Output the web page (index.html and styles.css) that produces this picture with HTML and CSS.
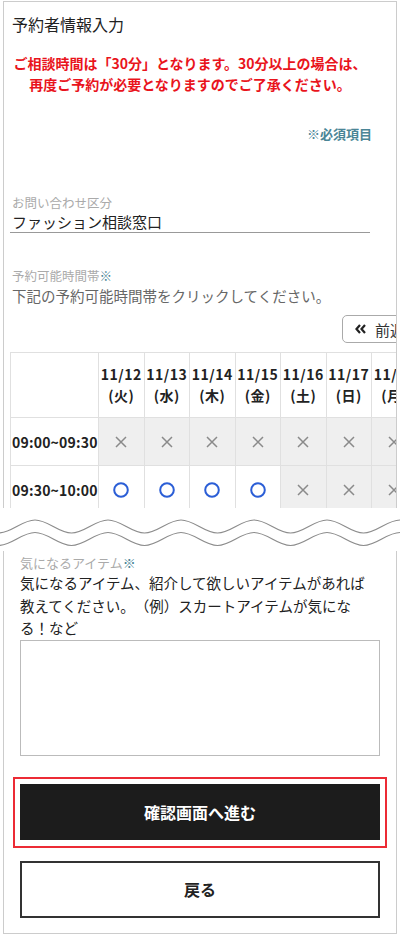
FILE: index.html
```html
<!DOCTYPE html>
<html lang="ja">
<head>
    <meta charset="UTF-8">
    <meta name="viewport" content="width=device-width, initial-scale=1.0">
    <title>予約者情報入力</title>
    <link rel="stylesheet" href="styles.css">
</head>
<body>
    <section class="sheet sheet-top">
        <h1 class="title">予約者情報入力</h1>
        <p class="notice">ご相談時間は「30分」となります。30分以上の場合は、<br>再度ご予約が必要となりますのでご了承ください。</p>
        <p class="required">※必須項目</p>

        <div class="field">
            <div class="label">お問い合わせ区分</div>
            <div class="value">ファッション相談窓口</div>
        </div>

        <div class="field field-time">
            <div class="label">予約可能時間帯<span class="mark">※</span></div>
            <p class="hint">下記の予約可能時間帯をクリックしてください。</p>
        </div>

        <div class="week-nav">
            <button class="week-btn">
                <svg width="11" height="10" viewBox="0 0 11 10"><path d="M5 1 L1.5 5 L5 9 M10 1 L6.5 5 L10 9" fill="none" stroke="#222" stroke-width="2.2"/></svg>
                前週
            </button>
        </div>

        <table class="slots">
            <colgroup>
                <col class="col-time">
                <col class="col-day"><col class="col-day"><col class="col-day"><col class="col-day">
                <col class="col-day"><col class="col-day"><col class="col-day">
            </colgroup>
            <thead>
                <tr>
                    <th></th>
                    <th>11/12<br>(火)</th>
                    <th>11/13<br>(水)</th>
                    <th>11/14<br>(木)</th>
                    <th>11/15<br>(金)</th>
                    <th>11/16<br>(土)</th>
                    <th>11/17<br>(日)</th>
                    <th>11/18<br>(月)</th>
                </tr>
            </thead>
            <tbody>
                <tr>
                    <td class="time">09:00~09:30</td>
                    <td class="full"><svg class="ng" viewBox="0 0 12 12"><path d="M1 1 L11 11 M11 1 L1 11"/></svg></td>
                    <td class="full"><svg class="ng" viewBox="0 0 12 12"><path d="M1 1 L11 11 M11 1 L1 11"/></svg></td>
                    <td class="full"><svg class="ng" viewBox="0 0 12 12"><path d="M1 1 L11 11 M11 1 L1 11"/></svg></td>
                    <td class="full"><svg class="ng" viewBox="0 0 12 12"><path d="M1 1 L11 11 M11 1 L1 11"/></svg></td>
                    <td class="full"><svg class="ng" viewBox="0 0 12 12"><path d="M1 1 L11 11 M11 1 L1 11"/></svg></td>
                    <td class="full"><svg class="ng" viewBox="0 0 12 12"><path d="M1 1 L11 11 M11 1 L1 11"/></svg></td>
                    <td class="full"><svg class="ng" viewBox="0 0 12 12"><path d="M1 1 L11 11 M11 1 L1 11"/></svg></td>
                </tr>
                <tr>
                    <td class="time">09:30~10:00</td>
                    <td><svg class="ok" viewBox="0 0 16 16"><circle cx="8" cy="8" r="6.8"/></svg></td>
                    <td><svg class="ok" viewBox="0 0 16 16"><circle cx="8" cy="8" r="6.8"/></svg></td>
                    <td><svg class="ok" viewBox="0 0 16 16"><circle cx="8" cy="8" r="6.8"/></svg></td>
                    <td><svg class="ok" viewBox="0 0 16 16"><circle cx="8" cy="8" r="6.8"/></svg></td>
                    <td class="full"><svg class="ng" viewBox="0 0 12 12"><path d="M1 1 L11 11 M11 1 L1 11"/></svg></td>
                    <td class="full"><svg class="ng" viewBox="0 0 12 12"><path d="M1 1 L11 11 M11 1 L1 11"/></svg></td>
                    <td class="full"><svg class="ng" viewBox="0 0 12 12"><path d="M1 1 L11 11 M11 1 L1 11"/></svg></td>
                </tr>
            </tbody>
        </table>
    </section>

    <!-- 省略 -->
    <div class="cut">
        <svg width="400" height="43" viewBox="0 0 400 43">
            <path class="wave" d="M -38 12 C -25 12 -14.5 25 -1.5 25 S 22 12 35 12 S 58.5 25 71.5 25 S 95 12 108 12 S 131.5 25 144.5 25 S 168 12 181 12 S 204.5 25 217.5 25 S 241 12 254 12 S 277.5 25 290.5 25 S 314 12 327 12 S 350.5 25 363.5 25 S 387 12 400 12 S 423.5 25 436.5 25"/>
            <path class="wave" transform="translate(0 12.5)" d="M -38 12 C -25 12 -14.5 25 -1.5 25 S 22 12 35 12 S 58.5 25 71.5 25 S 95 12 108 12 S 131.5 25 144.5 25 S 168 12 181 12 S 204.5 25 217.5 25 S 241 12 254 12 S 277.5 25 290.5 25 S 314 12 327 12 S 350.5 25 363.5 25 S 387 12 400 12 S 423.5 25 436.5 25"/>
        </svg>
    </div>

    <section class="sheet sheet-bottom">
        <div class="label">気になるアイテム<span class="mark">※</span></div>
        <p class="item-text">気になるアイテム、紹介して欲しいアイテムがあれば教えてください。（例）スカートアイテムが気になる！など</p>
        <textarea class="memo"></textarea>

        <div class="submit-wrap">
            <button class="btn btn-submit">確認画面へ進む</button>
        </div>
        <button class="btn btn-back">戻る</button>
    </section>
</body>
</html>
```

FILE: styles.css
```css
body {
    margin: 1px 0 0;
    font-family: "Noto Sans CJK JP", sans-serif;
    color: #222;
    background: #fff;
    text-spacing-trim: space-all;
}
.sheet {
    margin: 0 3px;
    border: 1px solid #ccc;
    overflow: hidden;
}
.sheet-top {
    height: 507px;
    box-sizing: border-box;
    border-bottom: none;
    padding: 10px 0 0 6px;
}
.title {
    margin: 0;
    padding-left: 2px;
    font-size: 16px;
    line-height: 25px;
    font-weight: normal;
}
.notice {
    margin: 16px 0 0;
    width: 360px;
    text-align: center;
    color: #e9141c;
    font-size: 14px;
    line-height: 21px;
    font-weight: bold;
}
.required {
    margin: 30px 0 0;
    width: 362px;
    text-align: right;
    color: #4a8596;
    font-size: 13px;
    line-height: 18px;
    font-weight: bold;
}
.field {
    width: 360px;
    margin-top: 51px;
}
.field-time {
    margin-top: 34px;
}
.label {
    padding-left: 2px;
    color: #aaa;
    font-size: 12.5px;
    line-height: 18px;
}
.mark {
    color: #4a8596;
}
.value {
    padding-left: 2px;
    font-size: 15px;
    line-height: 20px;
    border-bottom: 1px solid #999;
}
.hint {
    margin: 0;
    padding-left: 2px;
    color: #666;
    font-size: 14.5px;
    line-height: 21px;
}
.week-nav {
    display: flex;
    justify-content: flex-end;
    width: 406px;
    margin-top: 9px;
}
.week-btn {
    display: flex;
    align-items: center;
    gap: 9px;
    width: 74px;
    height: 28px;
    padding: 0 0 0 12px;
    border: 1px solid #aaa;
    border-radius: 5px;
    background: #fff;
    font-family: inherit;
    font-size: 15px;
    color: #333;
}
.slots {
    margin-top: 9px;
    border-collapse: collapse;
    table-layout: fixed;
    width: 407px;
}
.col-time {
    width: 88px;
}
.col-day {
    width: 45.5px;
}
.slots th, .slots td {
    border: 1px solid #e0e0e0;
    padding: 0;
    text-align: center;
}
.slots th {
    height: 64px;
    font-size: 14px;
    line-height: 21px;
    font-weight: bold;
    letter-spacing: 0.5px;
    white-space: nowrap;
}
.slots td {
    height: 47px;
}
.slots td.time {
    text-align: left;
    padding-left: 1px;
    font-size: 14px;
    font-weight: bold;
    letter-spacing: 0.2px;
    white-space: nowrap;
}
.slots td.full {
    background: #efefef;
}
.ng {
    display: block;
    width: 12px;
    height: 12px;
    margin: 0 auto;
    fill: none;
    stroke: #8a8a8a;
    stroke-width: 1.5;
}
.ok {
    display: block;
    width: 16px;
    height: 16px;
    margin: 0 auto;
    fill: none;
    stroke: #2b5ed6;
    stroke-width: 2;
}
.cut {
    height: 43px;
    background: #fff;
}
.cut svg {
    display: block;
}
.wave {
    fill: none;
    stroke: #8c8c8c;
    stroke-width: 1.2;
}
.sheet-bottom {
    border-top: none;
    padding: 3px 16px 15px;
}
.sheet-bottom .label {
    padding-left: 0;
    font-size: 13px;
}
.item-text {
    margin: 0;
    padding-right: 10px;
    font-size: 14.5px;
    line-height: 22.5px;
}
.memo {
    display: block;
    box-sizing: border-box;
    width: 100%;
    height: 116px;
    margin: 0;
    border: 1px solid #bbb;
    resize: none;
}
.submit-wrap {
    margin: 21px -7px 0;
    padding: 5px 5px 6px;
    border: 2px solid #ec2b35;
}
.btn {
    display: block;
    width: 100%;
    height: 56px;
    font-family: inherit;
    font-size: 16px;
    font-weight: bold;
    cursor: pointer;
}
.btn-submit {
    border: none;
    background: #1c1c1c;
    color: #fff;
}
.btn-back {
    height: 57px;
    margin-top: 13px;
    border: 2px solid #333;
    background: #fff;
    color: #222;
}
```
